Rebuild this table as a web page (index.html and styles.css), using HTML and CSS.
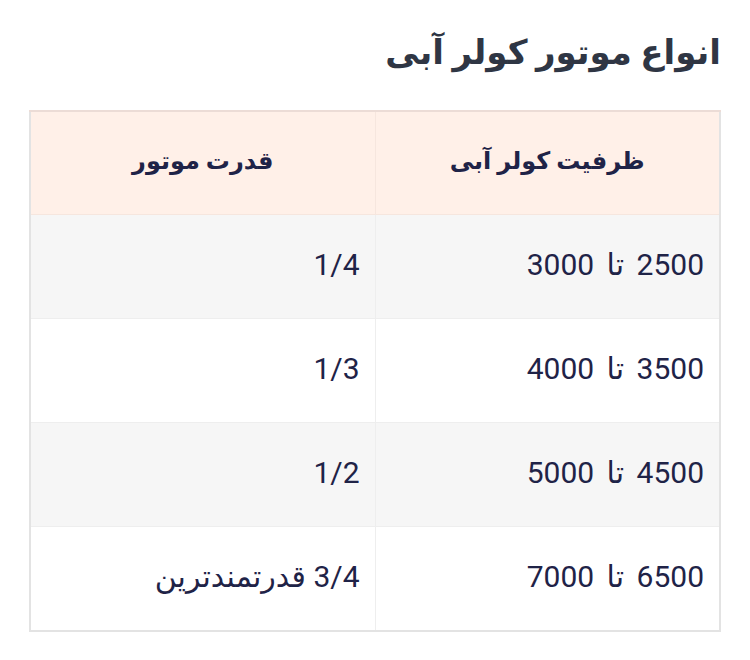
FILE: index.html
```html
<!DOCTYPE html>
<html lang="fa" dir="rtl">
<head>
<meta charset="utf-8">
<link rel="stylesheet" href="styles.css">
</head>
<body>
<main class="page">
  <h2 class="title">انواع موتور کولر آبی</h2>
  <table class="motors">
    <thead>
      <tr><th>ظرفیت کولر آبی</th><th>قدرت موتور</th></tr>
    </thead>
    <tbody>
      <tr><td class="range">2500 تا 3000</td><td>1/4</td></tr>
      <tr><td class="range">3500 تا 4000</td><td>1/3</td></tr>
      <tr><td class="range">4500 تا 5000</td><td>1/2</td></tr>
      <tr><td class="range">6500 تا 7000</td><td>3/4 قدرتمندترین</td></tr>
    </tbody>
  </table>
</main>
</body>
</html>
```
FILE: styles.css
```css
html, body {
  margin: 0;
  padding: 0;
  background: #ffffff;
}
.page {
  padding: 28px 29px 0 29px;
  font-family: Roboto, "DejaVu Sans", sans-serif;
  color: #1f2347;
}
.title {
  margin: 0 0 34px 0;
  font-size: 34px;
  line-height: 48px;
  font-weight: 700;
  color: #2f3644;
  text-align: right;
}
.motors {
  width: 692px;
  border-collapse: collapse;
  table-layout: fixed;
  border: 2px solid #e3e3e3;
}
.motors th, .motors td {
  width: 50%;
  border: 1px solid #eeeeee;
}
.motors th {
  height: 98px;
  padding: 0 15px 4px 15px;
  background: #fff0e8;
  font-size: 24px;
  font-weight: 700;
  text-align: center;
  border-color: #f6e6de;
}
.motors thead tr {
  border-top: 2px solid #ecdcd6;
}
.motors td {
  height: 99px;
  padding: 0 15px 4px 15px;
  font-size: 30px;
  font-weight: 400;
  text-align: right;
}
.motors td.range {
  word-spacing: 5px;
}
.motors tbody tr:nth-child(odd) td {
  background: #f6f6f6;
}
.motors tbody tr:nth-child(even) td {
  background: #ffffff;
}
```
